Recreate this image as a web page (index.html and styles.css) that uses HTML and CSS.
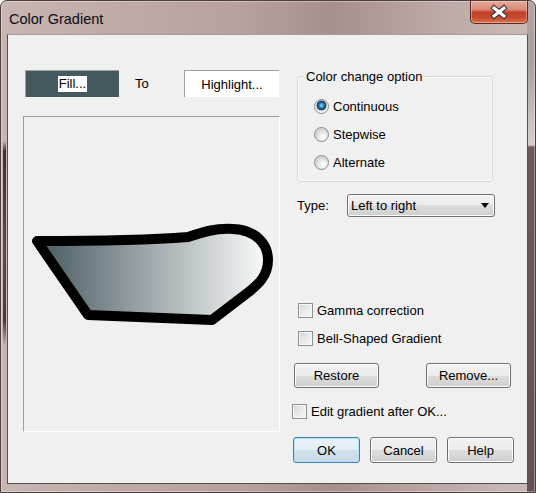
FILE: index.html
```html
<!DOCTYPE html>
<html>
<head>
<meta charset="utf-8">
<link rel="stylesheet" href="styles.css">
</head>
<body>
<div class="window">
  <div class="titlebar">
    <span class="title">Color Gradient</span>
    <div class="close">
      <svg width="20" height="16" viewBox="-10 -8 20 16">
        <path d="M-5,-4 L5,4 M5,-4 L-5,4" stroke="#3b3b3b" stroke-width="5.2" stroke-linecap="square" fill="none"/>
        <path d="M-5,-4 L5,4 M5,-4 L-5,4" stroke="#ffffff" stroke-width="3" stroke-linecap="square" fill="none"/>
      </svg>
    </div>
  </div>
  <div class="client">
    <div class="left">
      <div class="source-row">
        <div class="swatch fill"><span class="sel">Fill...</span></div>
        <span class="to">To</span>
        <div class="swatch highlight">Highlight...</div>
      </div>
      <div class="preview">
        <svg width="255" height="314" viewBox="24 117 255 314">
          <defs>
            <linearGradient id="g" gradientUnits="userSpaceOnUse" x1="40" y1="0" x2="266" y2="0">
              <stop offset="0" stop-color="#4a5d62"/>
              <stop offset="1" stop-color="#fafafa"/>
            </linearGradient>
          </defs>
          <path d="M37,241 C80,241 150,240 188,237 C203,232 215,228 233,229 C256,230 268,244 268,260 C268,276 258,285 246,294 L212,320 L88,315 Z" fill="url(#g)" stroke="#000" stroke-width="10" stroke-linejoin="round"/>
        </svg>
      </div>
    </div>
    <div class="right">
      <div class="group">
        <span class="legend">Color change option</span>
        <div class="opt"><span class="radio checked"></span>Continuous</div>
        <div class="opt"><span class="radio"></span>Stepwise</div>
        <div class="opt"><span class="radio"></span>Alternate</div>
      </div>
      <div class="type-row">
        <span class="type-label">Type:</span>
        <div class="select"><span>Left to right</span><span class="arrow"></span></div>
      </div>
      <div class="check gamma"><span class="box"></span>Gamma correction</div>
      <div class="check bell"><span class="box"></span>Bell-Shaped Gradient</div>
      <div class="btn-row">
        <div class="btn wide">Restore</div>
        <div class="btn wide">Remove...</div>
      </div>
      <div class="check edit"><span class="box"></span>Edit gradient after OK...</div>
      <div class="dlg-row">
        <div class="btn dlg default">OK</div>
        <div class="btn dlg">Cancel</div>
        <div class="btn dlg">Help</div>
      </div>
    </div>
  </div>
</div>
</body>
</html>
```
FILE: styles.css
```css
html, body {
  margin: 0;
  padding: 0;
  background: #f0f0f0;
}

body {
  font-family: "Liberation Sans", Arial, sans-serif;
  font-size: 13px;
  color: #000;
}

.window {
  width: 536px;
  height: 493px;
  box-sizing: border-box;
  border: 1px solid #4e3f3e;
  border-radius: 7px 7px 0 0;
  overflow: hidden;
  background:
    linear-gradient(to bottom, #b3a5a5 0, #a9a0a0 60px, #d6cfcf 144px, #6b5b5d 146px, #625254 100%) right 0 top 0 / 8px 100% no-repeat,
    linear-gradient(to bottom, transparent 140px, #3f3232 150px, #5c4a4a 250px, #4a3a3a 320px, transparent 345px) left 2px top 0 / 3px 100% no-repeat,
    linear-gradient(to right, #c8b6b2 0, #bfaaa5 22%, #b8a19c 45%, #a78f8b 62%, #b9a4a0 78%, #cbbcb8 100%);
  box-shadow: inset 0 0 0 1px rgba(255, 255, 255, 0.35);
}

.titlebar {
  height: 33px;
  display: flex;
  justify-content: space-between;
  align-items: flex-start;
}

.title {
  font-size: 14.5px;
  margin: 10px 0 0 8px;
  color: #0a0a14;
}

.close {
  width: 58px;
  height: 23px;
  margin-right: 7px;
  box-sizing: border-box;
  border: 1px solid #5b2b22;
  border-top: none;
  border-radius: 0 0 5px 5px;
  background: linear-gradient(to bottom, #e6ab9b 0, #d88874 40%, #c4402a 50%, #c64a30 75%, #dc7450 100%);
  box-shadow: inset 0 0 0 1px rgba(255, 220, 200, 0.45);
  display: flex;
  align-items: center;
  justify-content: center;
}

.client {
  margin: 0 0 0 6px;
  width: 521px;
  height: 450px;
  box-sizing: border-box;
  border: 1px solid #555050;
  border-top-color: #a89c9a;
  background: #f0f0f0;
  display: grid;
  grid-template-columns: 257px 1fr;
  column-gap: 10px;
  padding-left: 15px;
}

/* Left column */
.left {
  padding-top: 35px;
}

.source-row {
  display: flex;
  align-items: center;
  height: 27px;
}

.swatch {
  height: 27px;
  box-sizing: border-box;
  display: flex;
  align-items: center;
  justify-content: center;
  border-top: 1px solid #a0a0a0;
  border-left: 1px solid #a0a0a0;
}

.fill {
  width: 94px;
  margin-left: 2px;
  background: #455a5f;
}

.sel {
  background: #fff;
  line-height: 16px;
  padding: 0 1px;
}

.to {
  width: 65px;
  padding-left: 16px;
  box-sizing: border-box;
}

.highlight {
  width: 95px;
  background: #fff;
}

.preview {
  margin-top: 19px;
  width: 257px;
  height: 316px;
  box-sizing: border-box;
  border-top: 1px solid #a0a0a0;
  border-left: 1px solid #a0a0a0;
  border-right: 1px solid #fff;
  border-bottom: 1px solid #fff;
}

.preview svg {
  display: block;
}

/* Right column */
.right {
  display: flex;
  flex-direction: column;
  align-items: flex-start;
}

.group {
  position: relative;
  margin: 41px 0 0 7px;
  width: 196px;
  height: 106px;
  box-sizing: border-box;
  border: 1px solid #d5dadd;
  border-radius: 3px;
  box-shadow: inset 0 0 0 1px #fbfbfb;
  padding: 15px 0 5px 16px;
}

.legend {
  position: absolute;
  top: -8px;
  left: 6px;
  padding: 0 2px;
  background: #f0f0f0;
  line-height: 15px;
}

.opt {
  height: 28px;
  display: flex;
  align-items: center;
}

.radio {
  width: 15px;
  height: 15px;
  box-sizing: border-box;
  border-radius: 50%;
  border: 1px solid #8b8b8b;
  margin-right: 4px;
  background: radial-gradient(circle at 62% 68%, #ffffff 0, #f2f2f2 3px, #d6d6d6 7px);
}

.radio.checked {
  background: radial-gradient(circle at 50% 42%, #a8dcf8 0, #3a8cc8 2px, #104a78 4px, #0d3658 4.6px, #e4e4e4 5.2px, #f4f4f4 7px);
}

.type-row {
  margin: 12px 0 0 7px;
  height: 23px;
  display: flex;
  align-items: center;
}

.type-label {
  width: 50px;
}

.select {
  width: 148px;
  height: 23px;
  box-sizing: border-box;
  border: 1px solid #707070;
  border-radius: 3px;
  background: linear-gradient(to bottom, #f2f2f2 0, #ebebeb 50%, #dddddd 50%, #cfcfcf 100%);
  box-shadow: inset 0 0 0 1px #fcfcfc;
  display: flex;
  align-items: center;
  justify-content: space-between;
  padding: 0 5px 0 3px;
}

.arrow {
  width: 0;
  height: 0;
  border-left: 4.5px solid transparent;
  border-right: 4.5px solid transparent;
  border-top: 5px solid #000;
}

.check {
  height: 28px;
  display: flex;
  align-items: center;
}

.box {
  width: 15px;
  height: 15px;
  box-sizing: border-box;
  border: 1px solid #8e8f8f;
  background: linear-gradient(135deg, #cfd2d6 0, #e8e9ea 50%, #f8f8f8 100%);
  box-shadow: inset 0 0 0 1px #f6f6f6;
  margin-right: 4px;
}

.gamma {
  margin: 79px 0 0 8px;
}

.bell {
  margin-left: 8px;
}

.edit {
  margin: 9px 0 0 2px;
}

.btn-row {
  margin: 11px 0 0 4px;
  display: flex;
  gap: 47px;
}

.btn {
  height: 25px;
  box-sizing: border-box;
  border: 1px solid #707070;
  border-radius: 3px;
  background: linear-gradient(to bottom, #f2f2f2 0, #ebebeb 50%, #dddddd 50%, #cfcfcf 100%);
  box-shadow: inset 0 0 0 1px #fcfcfc;
  display: flex;
  align-items: center;
  justify-content: center;
}

.wide {
  width: 85px;
}

.dlg-row {
  margin: 12px 0 0 3px;
  display: flex;
  gap: 10px;
}

.dlg {
  width: 67px;
  height: 26px;
}

.default {
  border-color: #3c7fb1;
  background: linear-gradient(to bottom, #eaf3f9 0, #e2edf4 50%, #d2e2ec 50%, #c6d9e5 100%);
  box-shadow: inset 0 0 0 1px #b8e4f8;
}
```
